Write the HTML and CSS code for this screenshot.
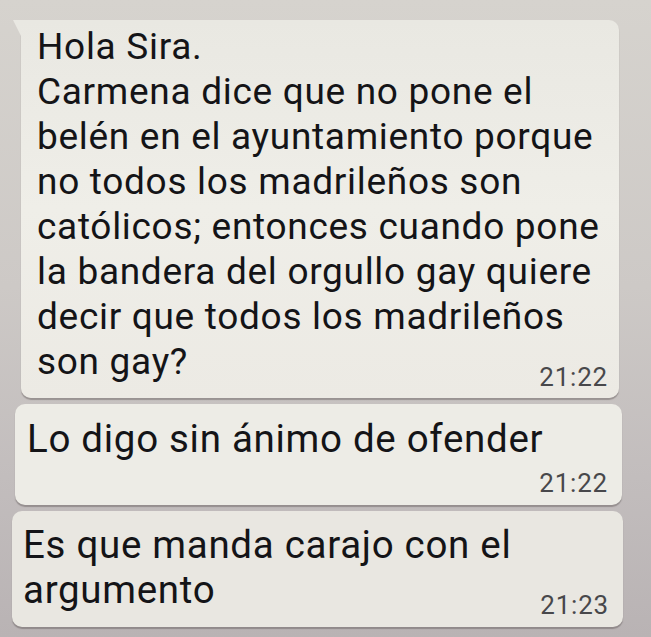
FILE: index.html
```html
<!DOCTYPE html>
<html lang="es">
<head>
<meta charset="utf-8">
<title>Chat</title>
<link rel="stylesheet" href="styles.css">
</head>
<body>
<div class="chat">
  <div class="bubble bubble-first">
    <div class="line">Hola Sira.</div>
    <div class="line">Carmena dice que no pone el</div>
    <div class="line">belén en el ayuntamiento porque</div>
    <div class="line">no todos los madrileños son</div>
    <div class="line">católicos; entonces cuando pone</div>
    <div class="line">la bandera del orgullo gay quiere</div>
    <div class="line">decir que todos los madrileños</div>
    <div class="row">
      <div class="line line-last">son gay?</div>
      <div class="time">21:22</div>
    </div>
  </div>
  <div class="bubble bubble-second">
    <div class="line line-big">Lo digo sin ánimo de ofender</div>
    <div class="row row-time">
      <div class="time">21:22</div>
    </div>
  </div>
  <div class="bubble bubble-third">
    <div class="line line-big">Es que manda carajo con el</div>
    <div class="row">
      <div class="line line-big line-last">argumento</div>
      <div class="time">21:23</div>
    </div>
  </div>
</div>
</body>
</html>
```
FILE: styles.css
```css
html, body {
  margin: 0;
  padding: 0;
}
body {
  width: 651px;
  height: 637px;
  overflow: hidden;
  background: linear-gradient(180deg, #d6d3ce 0%, #cdc9c6 45%, #c2bdbd 75%, #b9b3b4 100%);
  font-family: Roboto, "Noto Sans", "Liberation Sans", sans-serif;
}
.chat {
  display: flex;
  flex-direction: column;
  gap: 6px;
  padding-top: 20px;
}
.bubble {
  position: relative;
  background: #edece6;
  border-radius: 10px;
  box-shadow: 0 2px 1px rgba(70, 60, 60, 0.35);
  color: #141417;
  box-sizing: border-box;
}
.bubble-first {
  margin-left: 21px;
  width: 598px;
  padding: 4px 11px 6px 16px;
  border-top-left-radius: 0;
  background: linear-gradient(180deg, #e9e8e2 0%, #efeee8 50%, #eceae4 100%);
}
.bubble-first::before {
  content: "";
  position: absolute;
  left: -8px;
  top: 0;
  width: 0;
  height: 0;
  border-top: 16px solid #e9e8e2;
  border-left: 8px solid transparent;
}
.bubble-second {
  margin-left: 15px;
  width: 607px;
  padding: 12px 14px 7px 12px;
}
.bubble-third {
  margin-left: 12px;
  width: 611px;
  padding: 11px 14px 7px 11px;
  background: #e9e7e1;
}
.line {
  font-size: 37px;
  line-height: 45px;
  letter-spacing: 0.7px;
  white-space: nowrap;
}
.line-big {
  font-size: 38.5px;
}
.line-last {
  padding-bottom: 8px;
}
.row {
  display: flex;
  justify-content: space-between;
  align-items: flex-end;
}
.row-time {
  justify-content: flex-end;
  margin-top: 7px;
}
.time {
  font-size: 26px;
  line-height: 30px;
  letter-spacing: 0.8px;
  color: #48484b;
}
```
